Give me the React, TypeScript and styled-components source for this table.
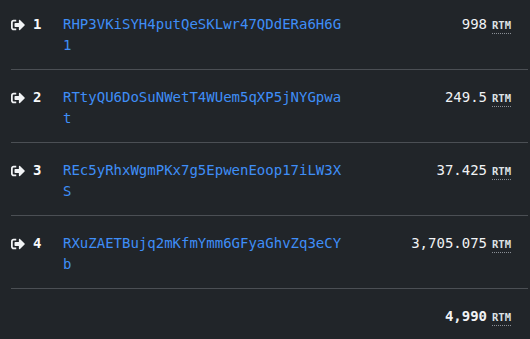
import styled, { createGlobalStyle } from 'styled-components';
import { FaSignOutAlt } from 'react-icons/fa';

const GlobalStyle = createGlobalStyle`
  html, body {
    margin: 0;
    padding: 0;
    background: #212529;
  }
  body {
    font-family: "DejaVu Sans Mono", "Liberation Mono", monospace;
    font-size: 14px;
    line-height: 21px;
    color: #f1f3f5;
  }
`;

const OutputList = styled.div`
  margin: -3px 2px 0 11px;
`;

const OutputRow = styled.div`
  display: grid;
  grid-template-columns: 14px 22px 282px 1fr;
  column-gap: 8px;
  align-items: start;
  padding: 17px 17px 13px 0;
  border-bottom: 1px solid #4b4f54;

  &:last-child {
    border-bottom: none;
  }
`;

const IconCell = styled.span`
  display: flex;
  align-items: center;
  height: 21px;
  color: #f1f3f5;
`;

const Index = styled.span`
  font-weight: bold;
  color: #f8f9fa;
`;

const Address = styled.a`
  color: #3f8ef7;
  text-decoration: none;
  word-break: break-all;
`;

const Amount = styled.span<{ $total?: boolean }>`
  grid-column: 4;
  text-align: right;
  white-space: nowrap;
  font-weight: ${(p) => (p.$total ? 'bold' : 'normal')};
`;

const Unit = styled.abbr`
  margin-left: 5px;
  font-size: 10.5px;
  font-weight: bold;
  color: #dee2e6;
  text-decoration: underline dotted #8a8f95;
  text-underline-offset: 4px;
  cursor: help;
`;

const outputs = [
  { address: 'RHP3VKiSYH4putQeSKLwr47QDdERa6H6G1', amount: '998' },
  { address: 'RTtyQU6DoSuNWetT4WUem5qXP5jNYGpwat', amount: '249.5' },
  { address: 'REc5yRhxWgmPKx7g5EpwenEoop17iLW3XS', amount: '37.425' },
  { address: 'RXuZAETBujq2mKfmYmm6GFyaGhvZq3eCYb', amount: '3,705.075' },
];

const App = () => {
  return (
    <>
      <GlobalStyle />
      <OutputList>
        {outputs.map((o, i) => (
          <OutputRow key={o.address}>
            <IconCell>
              <FaSignOutAlt size={14} />
            </IconCell>
            <Index>{i + 1}</Index>
            <Address href="#">{o.address}</Address>
            <Amount>
              {o.amount}
              <Unit title="Raptoreum">RTM</Unit>
            </Amount>
          </OutputRow>
        ))}
        <OutputRow>
          <Amount $total>
            4,990
            <Unit title="Raptoreum">RTM</Unit>
          </Amount>
        </OutputRow>
      </OutputList>
    </>
  );
};

export default App;
